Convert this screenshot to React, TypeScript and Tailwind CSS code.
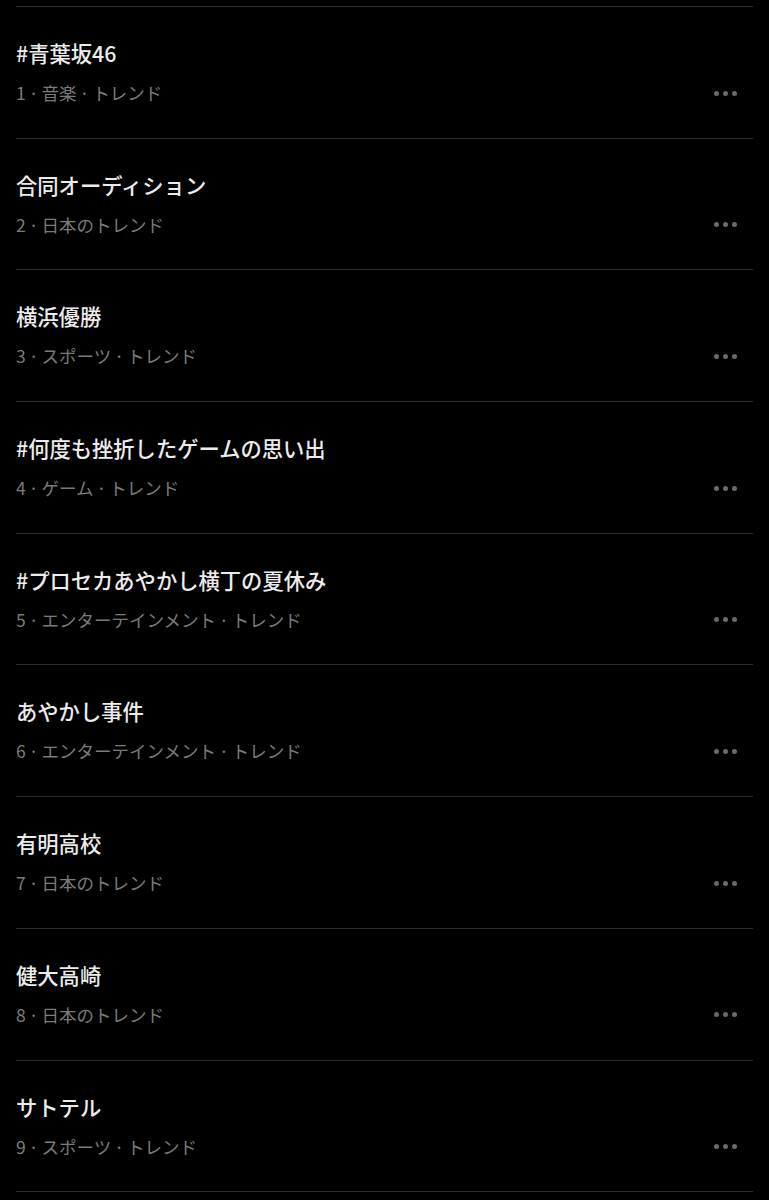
import React from "react";

type Trend = {
  rank: number;
  title: string;
  context: string[];
};

const TRENDS: Trend[] = [
  { rank: 1, title: "#青葉坂46", context: ["音楽", "トレンド"] },
  { rank: 2, title: "合同オーディション", context: ["日本のトレンド"] },
  { rank: 3, title: "横浜優勝", context: ["スポーツ", "トレンド"] },
  { rank: 4, title: "#何度も挫折したゲームの思い出", context: ["ゲーム", "トレンド"] },
  { rank: 5, title: "#プロセカあやかし横丁の夏休み", context: ["エンターテインメント", "トレンド"] },
  { rank: 6, title: "あやかし事件", context: ["エンターテインメント", "トレンド"] },
  { rank: 7, title: "有明高校", context: ["日本のトレンド"] },
  { rank: 8, title: "健大高崎", context: ["日本のトレンド"] },
  { rank: 9, title: "サトテル", context: ["スポーツ", "トレンド"] },
];

const MoreDots = () => (
  <div className="flex items-center gap-[4px]">
    <span className="block h-[5px] w-[5px] rounded-full bg-[#6a6a6a]" />
    <span className="block h-[5px] w-[5px] rounded-full bg-[#6a6a6a]" />
    <span className="block h-[5px] w-[5px] rounded-full bg-[#6a6a6a]" />
  </div>
);

const Dot = () => <span className="mx-[3px]">·</span>;

const TrendRow: React.FC<{ trend: Trend }> = ({ trend }) => (
  <div className="border-t border-[#2b2b2b] pt-[34px] pb-[33.7px]">
    <div className="text-[21.3px] leading-[24px] font-medium text-[#ececec]">
      {trend.title}
    </div>
    <div className="mt-[17px] flex items-center justify-between">
      <span className="text-[17.5px] leading-[22px] text-[#7b7b7b]">
        {trend.rank}
        {trend.context.map((c, i) => (
          <React.Fragment key={i}>
            <Dot />
            {c}
          </React.Fragment>
        ))}
      </span>
      <div className="mr-[16px]">
        <MoreDots />
      </div>
    </div>
  </div>
);

export default function App() {
  return (
    <div
      className="min-h-[1200px] w-full overflow-hidden bg-black px-4 pt-[6px]"
      style={{ fontFamily: '"Noto Sans CJK JP", "Noto Sans", sans-serif' }}>
      {TRENDS.map((t) => (
        <TrendRow key={t.rank} trend={t} />
      ))}
      <div className="border-t border-[#2b2b2b]" />
    </div>
  );
}
